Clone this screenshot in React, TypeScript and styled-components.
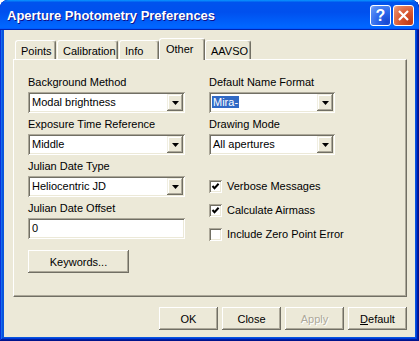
import React from 'react'
import styled, { createGlobalStyle } from 'styled-components'

const GlobalStyle = createGlobalStyle`
  html, body {
    margin: 0;
    padding: 0;
    background: #ffffff;
  }
  body {
    font-family: "Liberation Sans", Arial, sans-serif;
    font-size: 11px;
    color: #000000;
  }
`

const Window = styled.div`
  width: 419px;
  height: 341px;
  box-sizing: border-box;
  display: flex;
  flex-direction: column;
  background: #0855dd;
  border-radius: 8px 8px 0 0;
  overflow: hidden;
  padding-bottom: 4px;
  box-shadow: inset -1px -1px #00138c, inset 1px 1px #0831d9, inset -2px -2px #001ea0,
    inset 2px 2px #166aee, inset -3px -3px #003bda, inset 3px 3px #0855dd;
`

const TitleBar = styled.div`
  height: 30px;
  flex: none;
  display: flex;
  align-items: center;
  padding: 1px 5px 0 7px;
  box-sizing: border-box;
  border-radius: 8px 8px 0 0;
  background: linear-gradient(180deg, #0997ff, #0053ee 8%, #0050ee 40%, #0066ff 88%, #0066ff 93%, #005bff 95%, #0026b5 96%, #0026b5);
`

const Title = styled.div`
  flex: 1;
  color: #ffffff;
  font-weight: bold;
  font-size: 13px;
  text-shadow: 1px 1px #0f1089;
  white-space: nowrap;
`

const CaptionButtons = styled.div`
  display: flex;
  gap: 2px;
`

const CaptionButton = styled.div<{ $kind: 'help' | 'close' }>`
  width: 21px;
  height: 21px;
  box-sizing: border-box;
  border: 1px solid #ffffff;
  border-radius: 3px;
  display: flex;
  align-items: center;
  justify-content: center;
  color: #ffffff;
  font-weight: bold;
  font-size: 16px;
  background: ${p =>
    p.$kind === 'close'
      ? 'radial-gradient(circle at 85% 85%, #c13b18 0%, #d9572f 45%, #e58866 85%, #f2b7a3 100%)'
      : 'radial-gradient(circle at 85% 85%, #1746d1 0%, #2c67ec 45%, #5a8ef4 85%, #9cbdfa 100%)'};
`

const Client = styled.div`
  flex: 1;
  margin: 0 4px;
  background: #ece9d8;
  padding: 8px 8px 0 9px;
  display: flex;
  flex-direction: column;
`

const TabStrip = styled.div`
  display: flex;
  align-items: flex-end;
  height: 21px;
  padding-left: 2px;
  gap: 1px;
  position: relative;
  z-index: 1;
`

const Tab = styled.div<{ $w: number; $active?: boolean }>`
  box-sizing: border-box;
  width: ${p => p.$w}px;
  height: ${p => (p.$active ? 22 : 19)}px;
  margin: 0 ${p => (p.$active ? -1 : 0)}px ${p => (p.$active ? -1 : 0)}px;
  padding: 4px 0 0 ${p => (p.$active ? 6 : 5)}px;
  background: #ece9d8;
  border-top: 1px solid #ffffff;
  border-left: 1px solid #ffffff;
  border-right: 1px solid #716f64;
  border-radius: 3px 3px 0 0;
  box-shadow: inset -1px 0 #aca899;
  line-height: 13px;
  white-space: nowrap;
`

const Panel = styled.div`
  box-sizing: border-box;
  height: 238px;
  border-top: 1px solid #ffffff;
  border-left: 1px solid #ffffff;
  border-right: 1px solid #716f64;
  border-bottom: 1px solid #716f64;
  box-shadow: inset -1px -1px #aca899;
  padding: 16px 0 0 14px;
  display: flex;
  gap: 24px;
`

const Column = styled.div<{ $w: number }>`
  width: ${p => p.$w}px;
  display: flex;
  flex-direction: column;
`

const Label = styled.div`
  line-height: 13px;
  height: 13px;
  margin-bottom: 3px;
  white-space: nowrap;
`

const Field = styled.div`
  display: flex;
  flex-direction: column;
  & + & {
    margin-top: 5px;
  }
`

const Sunken = styled.div`
  height: 21px;
  box-sizing: border-box;
  padding: 2px;
  background: #ffffff;
  display: flex;
  align-items: center;
  box-shadow: inset 1px 1px #aca899, inset -1px -1px #ffffff, inset 2px 2px #716f64,
    inset -2px -2px #ece9d8;
`

const Value = styled.div`
  flex: 1;
  padding-left: 2px;
  line-height: 13px;
  white-space: nowrap;
  overflow: hidden;
`

const Selected = styled.span`
  background: #316ac5;
  color: #ffffff;
  margin-left: -1px;
  padding: 0 1px;
`

const DropButton = styled.div`
  width: 16px;
  height: 17px;
  box-sizing: border-box;
  background: #ece9d8;
  display: flex;
  align-items: center;
  justify-content: center;
  box-shadow: inset -1px -1px #716f64, inset 1px 1px #f1efe2, inset -2px -2px #aca899,
    inset 2px 2px #ffffff;
`

const PushButton = styled.div<{ $w: number; $disabled?: boolean }>`
  width: ${p => p.$w}px;
  height: 23px;
  box-sizing: border-box;
  background: #ece9d8;
  display: flex;
  align-items: center;
  justify-content: center;
  color: ${p => (p.$disabled ? '#aca899' : '#000000')};
  text-shadow: ${p => (p.$disabled ? '1px 1px #ffffff' : 'none')};
  box-shadow: inset -1px -1px #716f64, inset 1px 1px #ffffff, inset -2px -2px #aca899,
    inset 2px 2px #ece9d8;
`

const KeywordsButton = styled(PushButton)`
  margin-top: 11px;
`

const CheckList = styled.div`
  margin-top: 23px;
  display: flex;
  flex-direction: column;
  gap: 8px;
`

const CheckRow = styled.div`
  height: 16px;
  display: flex;
  align-items: center;
  gap: 5px;
  white-space: nowrap;
`

const CheckBox = styled.span`
  width: 13px;
  height: 13px;
  flex: none;
  box-sizing: border-box;
  background: #ffffff;
  display: flex;
  align-items: center;
  justify-content: center;
  box-shadow: inset 1px 1px #aca899, inset -1px -1px #ffffff, inset 2px 2px #716f64,
    inset -2px -2px #ece9d8;
`

const ButtonRow = styled.div`
  margin-top: 10px;
  display: flex;
  justify-content: flex-end;
  gap: 4px;
`

const Arrow = () => (
  <svg width="7" height="4" viewBox="0 0 7 4">
    <polygon points="0,0 7,0 3.5,4" fill="#000" />
  </svg>
)

const Check = () => (
  <svg width="9" height="9" viewBox="0 0 9 9">
    <polyline points="1.5,4 3.5,6.2 7.6,1.8" fill="none" stroke="#000" strokeWidth="2" />
  </svg>
)

function Combo({ value, editable }: { value: string; editable?: boolean }) {
  return (
    <Sunken>
      <Value>{editable ? <Selected>{value}</Selected> : value}</Value>
      <DropButton>
        <Arrow />
      </DropButton>
    </Sunken>
  )
}

function CheckItem({ label, checked }: { label: string; checked?: boolean }) {
  return (
    <CheckRow>
      <CheckBox>{checked && <Check />}</CheckBox>
      {label}
    </CheckRow>
  )
}

const tabs = [
  { name: 'Points', w: 41 },
  { name: 'Calibration', w: 61 },
  { name: 'Info', w: 40 },
  { name: 'Other', w: 46, active: true },
  { name: 'AAVSO', w: 46 },
]

export default function App() {
  return (
    <>
      <GlobalStyle />
      <Window>
        <TitleBar>
          <Title>Aperture Photometry Preferences</Title>
          <CaptionButtons>
            <CaptionButton $kind="help">?</CaptionButton>
            <CaptionButton $kind="close">
              <svg width="13" height="13" viewBox="0 0 13 13">
                <path d="M2 2 L11 11 M11 2 L2 11" stroke="#fff" strokeWidth="2.2" />
              </svg>
            </CaptionButton>
          </CaptionButtons>
        </TitleBar>
        <Client>
          <TabStrip>
            {tabs.map(t => (
              <Tab key={t.name} $w={t.w} $active={t.active}>
                {t.name}
              </Tab>
            ))}
          </TabStrip>
          <Panel>
            <Column $w={157}>
              <Field>
                <Label>Background Method</Label>
                <Combo value="Modal brightness" />
              </Field>
              <Field>
                <Label>Exposure Time Reference</Label>
                <Combo value="Middle" />
              </Field>
              <Field>
                <Label>Julian Date Type</Label>
                <Combo value="Heliocentric JD" />
              </Field>
              <Field>
                <Label>Julian Date Offset</Label>
                <Sunken>
                  <Value>0</Value>
                </Sunken>
              </Field>
              <KeywordsButton $w={101}>Keywords...</KeywordsButton>
            </Column>
            <Column $w={126}>
              <Field>
                <Label>Default Name Format</Label>
                <Combo value="Mira-" editable />
              </Field>
              <Field>
                <Label>Drawing Mode</Label>
                <Combo value="All apertures" />
              </Field>
              <CheckList>
                <CheckItem label="Verbose Messages" checked />
                <CheckItem label="Calculate Airmass" checked />
                <CheckItem label="Include Zero Point Error" />
              </CheckList>
            </Column>
          </Panel>
          <ButtonRow>
            <PushButton $w={59}>OK</PushButton>
            <PushButton $w={59}>Close</PushButton>
            <PushButton $w={59} $disabled>
              Apply
            </PushButton>
            <PushButton $w={59}>
              <u>D</u>efault
            </PushButton>
          </ButtonRow>
        </Client>
      </Window>
    </>
  )
}
